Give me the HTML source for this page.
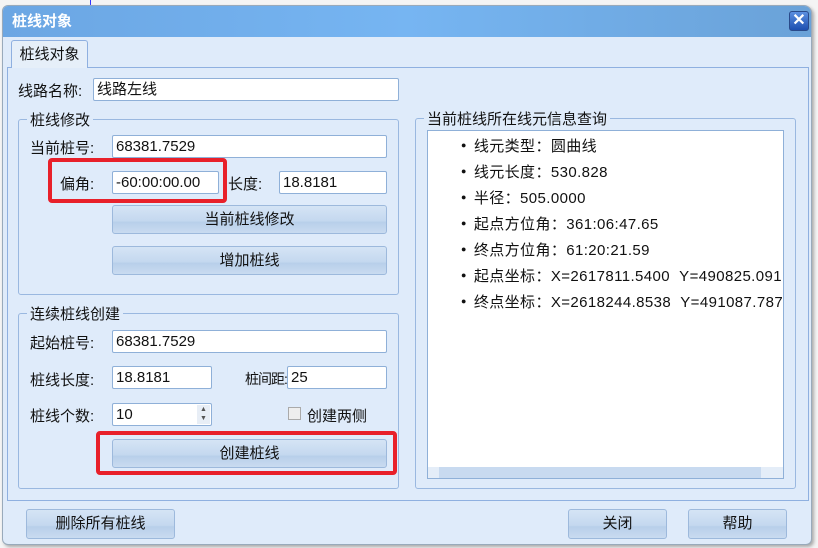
<!DOCTYPE html>
<html><head><meta charset="utf-8"><style>
*{box-sizing:border-box;margin:0;padding:0}
body{width:818px;height:548px;background:#f4f4f4;font-family:"Liberation Sans","Noto Sans CJK SC",sans-serif;font-size:15px;color:#111;position:relative;overflow:hidden}
.a{position:absolute}
.dlg{left:2px;top:5px;width:810px;height:540px;background:#dfebfa;border:1px solid #9ab;border-radius:6px 8px 6px 6px;overflow:hidden;box-shadow:2px 2px 3px #aaa}
.title{left:0;top:0;width:100%;height:31px;background:linear-gradient(90deg,#6ba6e3,#76b5f2 50%,#6aa2d8);color:#fff;font-weight:bold;font-size:15px;line-height:31px;padding-left:9px}
.inp{position:absolute;background:#fff;border:1px solid #8fb0d8;border-radius:2px;height:23px;line-height:21px;padding-left:3px;font-size:15px}
.btn{position:absolute;border:1px solid #9db9dc;border-radius:3px;background:linear-gradient(#d5e4f5,#c4d8ef 55%,#b8cfea 60%,#c9dbf0);text-align:center;font-size:15px}
.grp{position:absolute;border:1px solid #9ab8e0;border-radius:3px}
.gl{position:absolute;top:-11px;left:8px;background:#dfebfa;padding:0 3px;font-size:15px}
.lbl{position:absolute;font-size:15px;white-space:nowrap}
.red{position:absolute;border:4px solid #e8202a;border-radius:4px}
li{list-style:none;height:26px;line-height:26px;font-size:15px;white-space:nowrap;letter-spacing:0.4px}
li:before{content:"●";font-size:9px;vertical-align:3px;margin-right:7px}
</style></head><body>
<div class="a" style="left:90px;top:0;width:1px;height:6px;background:#33f"></div>
<div class="a dlg">
<div class="a title">桩线对象</div>
<div class="a" style="left:786px;top:5px;width:20px;height:20px;border-radius:3px;background:linear-gradient(#5b8fe0,#1d4fb0);border:1px solid #2a4a8a;color:#fff;font-weight:bold;text-align:center;line-height:18px;font-size:16px">✕</div>
<div class="a" style="left:4px;top:61px;width:802px;height:434px;border:1px solid #8fb0e0"></div>
<div class="a" style="left:8px;top:34px;width:77px;height:28px;border:1px solid #8fb0e0;border-bottom:none;border-radius:3px 3px 0 0;background:#e6eff9;text-align:center;line-height:27px">桩线对象</div>
</div>
<div class="lbl" style="left:18px;top:80px">线路名称:</div>
<div class="inp" style="left:93px;top:78px;width:306px">线路左线</div>

<div class="grp" style="left:18px;top:119px;width:381px;height:176px"><div class="gl">桩线修改</div></div>
<div class="lbl" style="left:30px;top:137px">当前桩号:</div>
<div class="inp" style="left:112px;top:135px;width:275px">68381.7529</div>
<div class="lbl" style="left:60px;top:173px">偏角:</div>
<div class="inp" style="left:112px;top:171px;width:107px">-60:00:00.00</div>
<div class="red" style="left:48px;top:158px;width:179px;height:45px"></div>
<div class="lbl" style="left:228px;top:173px">长度:</div>
<div class="inp" style="left:279px;top:171px;width:108px">18.8181</div>
<div class="btn" style="left:112px;top:205px;width:275px;height:29px;line-height:27px">当前桩线修改</div>
<div class="btn" style="left:112px;top:246px;width:275px;height:29px;line-height:27px">增加桩线</div>

<div class="grp" style="left:18px;top:313px;width:381px;height:176px"><div class="gl">连续桩线创建</div></div>
<div class="lbl" style="left:30px;top:332px">起始桩号:</div>
<div class="inp" style="left:112px;top:330px;width:275px">68381.7529</div>
<div class="lbl" style="left:30px;top:369px">桩线长度:</div>
<div class="inp" style="left:112px;top:366px;width:100px">18.8181</div>
<div class="inp" style="left:287px;top:366px;width:100px">25</div>
<div class="lbl" style="left:245px;top:369px;font-size:14px;letter-spacing:-1px;z-index:2">桩间距:</div>
<div class="lbl" style="left:30px;top:405px">桩线个数:</div>
<div class="inp" style="left:112px;top:403px;width:100px">10</div>
<div class="a" style="left:197px;top:405px;width:13px;height:19px;background:#e8eef6;font-size:7px;line-height:9px;text-align:center;color:#555">▲<br>▼</div>
<div class="a" style="left:288px;top:407px;width:13px;height:13px;border:1px solid #aaa;background:#eee"></div>
<div class="lbl" style="left:307px;top:405px">创建两侧</div>
<div class="btn" style="left:112px;top:439px;width:275px;height:29px;line-height:27px">创建桩线</div>
<div class="red" style="left:96px;top:431px;width:301px;height:44px"></div>

<div class="grp" style="left:415px;top:118px;width:381px;height:371px"><div class="gl">当前桩线所在线元信息查询</div></div>
<div class="a" style="left:427px;top:130px;width:357px;height:349px;background:#fff;border:1px solid #8fb0d8;overflow:hidden">
<ul style="padding:1px 0 0 33px">
<li>线元类型：圆曲线</li><li>线元长度：530.828</li><li>半径：505.0000</li><li>起点方位角：361:06:47.65</li><li>终点方位角：61:20:21.59</li><li>起点坐标：X=2617811.5400&nbsp;&nbsp;Y=490825.091</li><li>终点坐标：X=2618244.8538&nbsp;&nbsp;Y=491087.787</li>
</ul>
<div class="a" style="left:0;top:336px;width:355px;height:11px;background:#e4edf8"></div>
<div class="a" style="left:11px;top:336px;width:322px;height:11px;background:#c8daf0"></div>
</div>

<div class="btn" style="left:26px;top:509px;width:149px;height:30px;line-height:28px">删除所有桩线</div>
<div class="btn" style="left:568px;top:509px;width:99px;height:30px;line-height:28px">关闭</div>
<div class="btn" style="left:688px;top:509px;width:99px;height:30px;line-height:28px">帮助</div>
</body></html>
